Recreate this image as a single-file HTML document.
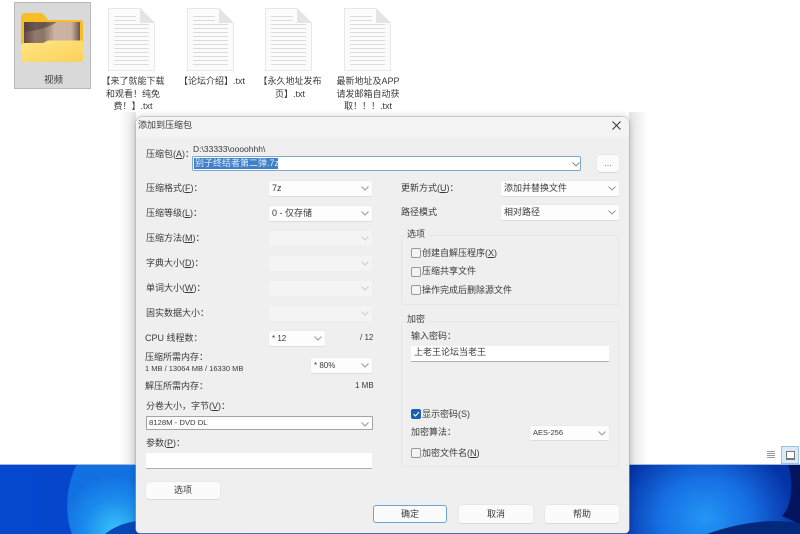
<!DOCTYPE html>
<html lang="zh"><head><meta charset="utf-8"><style>
*{box-sizing:border-box}
html,body{margin:0;padding:0;background:#fff}
body{width:800px;height:534px;overflow:hidden;position:relative;font-family:"Liberation Sans","Noto Sans CJK SC",sans-serif;font-size:9px;color:#3a3a3a}
#w{position:absolute;left:0;top:0;width:800px;height:534px;filter:blur(.35px);overflow:hidden}
.a{position:absolute;white-space:nowrap;line-height:12px}
.s{position:absolute;height:15px;background:#fdfdfd;border-radius:2px;box-shadow:0 0 0 .5px #e6e6e6,0 1px 0 #d4d4d4;padding-left:3px;line-height:15px;white-space:nowrap}
.s.d{background:#f4f4f4;box-shadow:0 0 0 .5px #ececec}
.s svg{position:absolute;right:3px;top:5px}
.b{position:absolute;background:#fbfbfb;border-radius:3px;box-shadow:0 0 0 .5px #e0e0e0,0 1px 0 #d0d0d0;text-align:center}
.c{position:absolute;width:10px;height:10px;border:1px solid #999;border-radius:2px;background:#f4f4f4}
.g{position:absolute;border:1px solid #e6e6e6;border-radius:3px}
.l{position:absolute;background:#efefef;padding:0 2px;line-height:10px;white-space:nowrap}
.f{position:absolute;width:47px;height:63px}
.t{position:absolute;width:90px;text-align:center;line-height:12.5px;font-size:9px;color:#3a3a3a;white-space:nowrap}
</style></head><body><div id="w">
<svg class="a" style="left:0;top:464px" width="800" height="70" viewBox="0 0 800 70">
<defs>
<linearGradient id="w1" x1="0" y1="0" x2="1" y2="0"><stop offset="0" stop-color="#0548d0"/><stop offset="1" stop-color="#052c98"/></linearGradient>
<radialGradient id="w2" cx="0.7" cy="0.95" r="0.8"><stop offset="0" stop-color="#38c4f6"/><stop offset=".55" stop-color="#1c8cee"/><stop offset="1" stop-color="#1270e0"/></radialGradient>
<radialGradient id="w3" gradientUnits="userSpaceOnUse" cx="705" cy="55" r="90" gradientTransform="translate(0 5) scale(1 .9)"><stop offset="0" stop-color="#2396f5"/><stop offset=".5" stop-color="#1670e4"/><stop offset="1" stop-color="#0533a6"/></radialGradient>
</defs>
<rect width="800" height="70" fill="url(#w1)"/>
<path d="M77 0C66 20 64 50 72 70H136V0Z" fill="url(#w2)"/>
<path d="M105 70C115 62 125 59 136 57V70Z" fill="#0648b8"/>
<rect x="625" width="170" height="70" fill="url(#w3)"/>
<path d="M788 0C794 20 792 42 782 52L800 60V0Z" fill="#03135c"/>
<path d="M707 70C735 60 770 53 800 60V70Z" fill="#04287c"/>
</svg>
<div class="a" style="left:0;top:464px;width:800px;height:1px;background:#9db9e2"></div>
<div class="a" style="left:120px;top:112px;width:16px;height:352px;background:linear-gradient(90deg,#fff,#e4e4e4)"></div>
<div class="a" style="left:629px;top:112px;width:20px;height:352px;background:linear-gradient(270deg,#fff,#e4e4e4)"></div>
<div class="a" style="left:14px;top:2px;width:77px;height:87px;background:#d9d9d9;border:1px solid #b9b9b9"></div>
<svg class="a" style="left:21px;top:13px" width="63" height="50" viewBox="0 0 63 50">
<defs><linearGradient id="fo" x1="0" y1="0" x2="1" y2="1"><stop offset="0" stop-color="#fee684"/><stop offset="1" stop-color="#fcd05a"/></linearGradient>
<linearGradient id="ph" x1="0" y1="0" x2="1" y2="0"><stop offset="0" stop-color="#5d4a42"/><stop offset=".2" stop-color="#94796c"/><stop offset=".35" stop-color="#8a7468"/><stop offset=".55" stop-color="#cdb5a6"/><stop offset=".85" stop-color="#c9af9f"/><stop offset="1" stop-color="#6a5650"/></linearGradient></defs>
<path d="M0 5Q0 0 4 0H19Q22 0 24 3L27 7H59Q62 7 62 10V40H0Z" fill="#f9bd25"/>
<rect x="3" y="9" width="56" height="24" fill="url(#ph)"/>
<path d="M3 9H36C30 13 20 17 3 19Z" fill="#4a3a34" opacity=".55"/>
<path d="M0 33Q0 30 3 30H20Q23 30 25 28.500L27 27.500H59Q62 27 62 30V46Q62 49 59 49H3Q0 49 0 46Z" fill="url(#fo)"/>
</svg>
<div class="a" style="left:44px;top:75px;font-size:9.5px">视频</div>
<svg width="0" height="0" style="position:absolute"><defs><g id="doc">
<path d="M.5.5H32L46.5 15V62.500H.5Z" fill="#fbfbfb" stroke="#e8e8e8"/>
<path d="M32 .5V15H46.500Z" fill="#e4e4e4"/>
<path d="M6 8.500H28M6 12.500H28M6 16.500H41M6 20.500H41M6 24.500H41M6 28.500H41M6 32.500H41M6 36.500H41M6 40.500H41M6 44.500H41M6 48.500H41M6 52.500H41M6 56.500H41" stroke="#dcdcdc" stroke-width="1"/>
</g></defs></svg>
<svg class="f" style="left:108px;top:8px" viewBox="0 0 47 63"><use href="#doc"/></svg>
<svg class="f" style="left:187px;top:8px" viewBox="0 0 47 63"><use href="#doc"/></svg>
<svg class="f" style="left:265px;top:8px" viewBox="0 0 47 63"><use href="#doc"/></svg>
<svg class="f" style="left:344px;top:8px" viewBox="0 0 47 63"><use href="#doc"/></svg>
<div class="t" style="left:88px;top:75px">【来了就能下载<br>和观看！纯免<br>费！】.txt</div>
<div class="t" style="left:167px;top:75px">【论坛介绍】.txt</div>
<div class="t" style="left:245px;top:75px">【永久地址发布<br>页】.txt</div>
<div class="t" style="left:323px;top:75px">最新地址及APP<br>请发邮箱自动获<br>取！！！.txt</div>

<div class="a" style="left:136px;top:117px;width:493px;height:416px;background:#efefef;border-radius:6px 6px 4px 4px;box-shadow:0 0 8px rgba(0,0,0,.22),0 0 0 .5px #b9bcc2">
<div class="a" style="left:0;top:0;width:493px;height:20px;background:#f4f4f4;border-radius:6px 6px 0 0"></div>
</div>
<div class="a" style="left:138px;top:119px;font-size:9px">添加到压缩包</div>
<svg class="a" style="left:612px;top:121px" width="9" height="9"><path d="M.5.5L8.500 8.500M8.500.5L.5 8.500" stroke="#333" stroke-width="1"/></svg>

<div class="a" style="left:146px;top:148px">压缩包(<u>A</u>)：</div>
<div class="a" style="left:193px;top:143px;font-size:8.5px">D:\33333\oooohhh\</div>
<div class="a" style="left:192px;top:156px;width:389px;height:15px;background:#fff;border:1px solid #7aa9d0;border-radius:2px"></div>
<div class="a" style="left:194px;top:158px;width:84px;height:11px;background:#3f80cb;color:#e3ecf6;line-height:11px;padding-left:1px">别子终结者第二弹.7z</div>
<svg class="a" style="left:572px;top:162px" width="8" height="5"><path d="M.5.5L4 4L7.500.5" fill="none" stroke="#888"/></svg>
<div class="b" style="left:597px;top:155px;width:22px;height:17px;line-height:17px;color:#777">...</div>

<div class="a" style="left:146px;top:182px">压缩格式(<u>F</u>)：</div>
<div class="s" style="left:269px;top:181px;width:103px">7z<svg width="8" height="5"><path d="M.5.500L4 4L7.500.5" fill="none" stroke="#999"/></svg></div>
<div class="a" style="left:146px;top:207px">压缩等级(<u>L</u>)：</div>
<div class="s" style="left:269px;top:206px;width:103px">0 - 仅存储<svg width="8" height="5"><path d="M.5.500L4 4L7.500.5" fill="none" stroke="#999"/></svg></div>
<div class="a" style="left:146px;top:232px">压缩方法(<u>M</u>)：</div>
<div class="s d" style="left:269px;top:231px;width:103px"><svg width="8" height="5"><path d="M.5.500L4 4L7.500.5" fill="none" stroke="#ccc"/></svg></div>
<div class="a" style="left:146px;top:257px">字典大小(<u>D</u>)：</div>
<div class="s d" style="left:269px;top:256px;width:103px"><svg width="8" height="5"><path d="M.5.500L4 4L7.500.5" fill="none" stroke="#ccc"/></svg></div>
<div class="a" style="left:146px;top:282px">单词大小(<u>W</u>)：</div>
<div class="s d" style="left:269px;top:281px;width:103px"><svg width="8" height="5"><path d="M.5.500L4 4L7.500.5" fill="none" stroke="#ccc"/></svg></div>
<div class="a" style="left:146px;top:307px">固实数据大小：</div>
<div class="s d" style="left:269px;top:306px;width:103px"><svg width="8" height="5"><path d="M.5.500L4 4L7.500.5" fill="none" stroke="#ccc"/></svg></div>
<div class="a" style="left:145px;top:332px">CPU 线程数：</div>
<div class="s" style="left:269px;top:331px;width:56px;font-size:8px">* 12<svg width="8" height="5"><path d="M.5.500L4 4L7.500.5" fill="none" stroke="#999"/></svg></div>
<div class="a" style="left:360px;top:332px;font-size:8px">/ 12</div>
<div class="a" style="left:145px;top:351px">压缩所需内存：</div>
<div class="a" style="left:145px;top:363px;font-size:7.5px">1 MB / 13064 MB / 16330 MB</div>
<div class="s" style="left:311px;top:358px;width:61px;font-size:8px">* 80%<svg width="8" height="5"><path d="M.5.500L4 4L7.500.5" fill="none" stroke="#999"/></svg></div>
<div class="a" style="left:145px;top:380px">解压所需内存：</div>
<div class="a" style="left:355px;top:380px;font-size:8px">1 MB</div>
<div class="a" style="left:146px;top:400px">分卷大小，字节(<u>V</u>)：</div>
<div class="s" style="left:146px;top:416px;width:227px;height:14px;line-height:12px;border:1px solid #a4a4a4;box-shadow:none;padding-left:2px;border-radius:1px;font-size:7.7px">8128M - DVD DL<svg width="8" height="5"><path d="M.5.500L4 4L7.500.5" fill="none" stroke="#999"/></svg></div>
<div class="a" style="left:146px;top:437px">参数(<u>P</u>)：</div>
<div class="a" style="left:146px;top:453px;width:226px;height:16px;background:#fff;border-bottom:1px solid #b0b0b0"></div>
<div class="b" style="left:146px;top:482px;width:74px;height:17px;line-height:17px">选项</div>

<div class="a" style="left:401px;top:182px">更新方式(<u>U</u>)：</div>
<div class="s" style="left:501px;top:181px;width:118px">添加并替换文件<svg width="8" height="5"><path d="M.5.500L4 4L7.500.5" fill="none" stroke="#999"/></svg></div>
<div class="a" style="left:401px;top:206px">路径模式</div>
<div class="s" style="left:501px;top:205px;width:118px">相对路径<svg width="8" height="5"><path d="M.5.500L4 4L7.500.5" fill="none" stroke="#999"/></svg></div>

<div class="g" style="left:401px;top:235px;width:218px;height:70px"></div>
<div class="l" style="left:405px;top:229px">选项</div>
<div class="c" style="left:411px;top:248px"></div><div class="a" style="left:422px;top:247px">创建自解压程序(<u>X</u>)</div>
<div class="c" style="left:411px;top:267px"></div><div class="a" style="left:422px;top:265px">压缩共享文件</div>
<div class="c" style="left:411px;top:285px"></div><div class="a" style="left:422px;top:284px">操作完成后删除源文件</div>

<div class="g" style="left:401px;top:321px;width:218px;height:146px"></div>
<div class="l" style="left:405px;top:314px">加密</div>
<div class="a" style="left:411px;top:330px">输入密码：</div>
<div class="a" style="left:411px;top:346px;width:198px;height:16px;background:#fff;border-bottom:1px solid #b0b0b0;padding-left:3px;line-height:13px">上老王论坛当老王</div>
<div class="a" style="left:411px;top:409px;width:10px;height:10px;background:#1a5fb4;border-radius:2px"></div>
<svg class="a" style="left:413px;top:411px" width="7" height="6"><path d="M.5 3L2.500 5L6 1" fill="none" stroke="#fff" stroke-width="1"/></svg>
<div class="a" style="left:422px;top:408px">显示密码(S)</div>
<div class="a" style="left:411px;top:426px">加密算法：</div>
<div class="s" style="left:530px;top:426px;width:79px;height:14px;line-height:14px;font-size:7.500px">AES-256<svg width="8" height="5"><path d="M.5.500L4 4L7.500.5" fill="none" stroke="#999"/></svg></div>
<div class="c" style="left:411px;top:448px"></div><div class="a" style="left:422px;top:447px">加密文件名(<u>N</u>)</div>

<div class="b" style="left:373px;top:505px;width:74px;height:18px;line-height:17px;border:1px solid #6aa5d6;box-shadow:none">确定</div>
<div class="b" style="left:459px;top:505px;width:74px;height:18px;line-height:18px">取消</div>
<div class="b" style="left:545px;top:505px;width:74px;height:18px;line-height:18px">帮助</div>

<svg class="a" style="left:766px;top:450px" width="10" height="10"><path d="M1 1.500H9M1 3.500H9M1 5.500H9M1 7.500H9" stroke="#999" stroke-width="1"/></svg>
<div class="a" style="left:781px;top:446px;width:18px;height:18px;background:#dbeaf6;border:1px solid #9cc4e2"></div>
<div class="a" style="left:786px;top:451px;width:9px;height:9px;background:#fff;border:1px solid #777;border-bottom-width:2px"></div>
</div></body></html>
